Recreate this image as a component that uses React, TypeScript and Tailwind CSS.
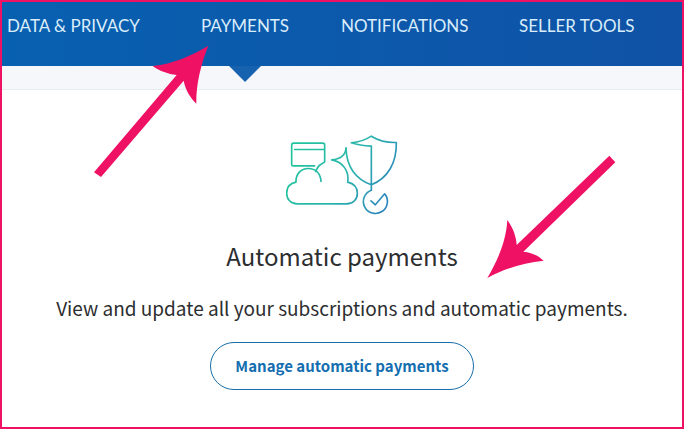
const links = [
  { label: "DATA & PRIVACY", href: "#privacy" },
  { label: "PAYMENTS", href: "#payments", active: true },
  { label: "NOTIFICATIONS", href: "#notifications" },
  { label: "SELLER TOOLS", href: "#seller-tools" },
]

function CloudShieldIcon() {
  return (
    <svg className="w-28 h-[82px]" viewBox="36 27 336 243" fill="none" stroke="url(#teal)" strokeWidth="5" strokeLinecap="round" strokeLinejoin="round" aria-hidden="true">
      <defs>
        <linearGradient id="teal" gradientUnits="userSpaceOnUse" x1="60" y1="60" x2="370" y2="240">
          <stop offset="0" stopColor="#22c49c" />
          <stop offset="0.5" stopColor="#2bb5ac" />
          <stop offset="1" stopColor="#2c7cc0" />
        </linearGradient>
      </defs>
      {/* card */}
      <path d="M122 121H58Q53 121 53 116V59Q53 53 59 53H146Q152 53 152 59V109L136 120Q130 125 125 138M62 72H151" />
      {/* cloud */}
      <path d="M141 168C140 144 125 129 103 129C80 129 65 146 66 170C48 174 38 186 38 203C38 221 50 235 70 235H218C238 235 250 221 250 203C250 186 239 174 221 170C226 138 207 108 173 103C199 102 215 88 216 68" />
      {/* shield */}
      <path d="M216 68C218 122 244 160 292 178C342 158 368 112 367 51C341 52 315 46 292 32C275 43 255 50 232 52C250 58 270 61 292 62V194" />
      {/* check badge */}
      <path d="M292 194A36 36 0 1 0 332 205L304 238L291 226" />
    </svg>
  )
}

export default function App() {
  return (
    <div className="relative min-h-screen overflow-hidden border-2 border-[#ee1164] bg-white font-['Noto_Sans_CJK_SC',sans-serif] text-[#2c2e2f]">
      <header className="bg-linear-to-r from-[#0860b0] to-[#0f52a6]">
        <nav className="grid h-16 grid-cols-[194px_140px_178px_auto] justify-start pl-[5px] font-[Lato,sans-serif] text-[17px] leading-6 text-[#d9edfb]">
          {links.map((link) => (
            <a key={link.label} href={link.href} className="relative justify-self-start pt-3 whitespace-nowrap">
              {link.label}
              {link.active && (
                <span className="absolute top-full left-1/2 h-4 w-8 -translate-x-1/2 bg-[#1762ae] [clip-path:polygon(0_0,100%_0,50%_100%)]" />
              )}
            </a>
          ))}
        </nav>
      </header>
      <div className="h-6 border-b border-[#e9ecef] bg-[#f6f7fa]" />

      <main className="relative flex flex-col items-center px-4 pt-11 text-center">
        <CloudShieldIcon />
        <h1 className="mt-6 text-2xl leading-8">Automatic payments</h1>
        <p className="mt-6 text-[19px] leading-6">View and update all your subscriptions and automatic payments.</p>
        <button type="button" className="mt-[22px] h-12 rounded-full border border-[#1a6ea8] px-6 text-[15px] font-bold text-[#146eb0]">
          Manage automatic payments
        </button>

        <svg className="absolute top-16 left-1/2 ml-36 w-[131px] h-[126px]" viewBox="48 45 393 378" fill="#ee1164" aria-hidden="true">
          <path d="M52 417C82 365 108 310 112 243C126 263 138 286 140 318L418 50L436 70L160 338C185 340 204 350 221 365C160 372 105 388 52 417Z" />
        </svg>
      </main>

      <svg className="absolute top-[42px] left-[90px] w-[118px] h-[135px]" viewBox="36 42 354 405" fill="#ee1164" aria-hidden="true">
        <path d="M385 47C363 103 348 160 349 221C332 204 317 182 311 152L63 441L42 427L290 135C264 132 240 124 218 108C280 101 333 78 385 47Z" />
      </svg>
    </div>
  )
}
